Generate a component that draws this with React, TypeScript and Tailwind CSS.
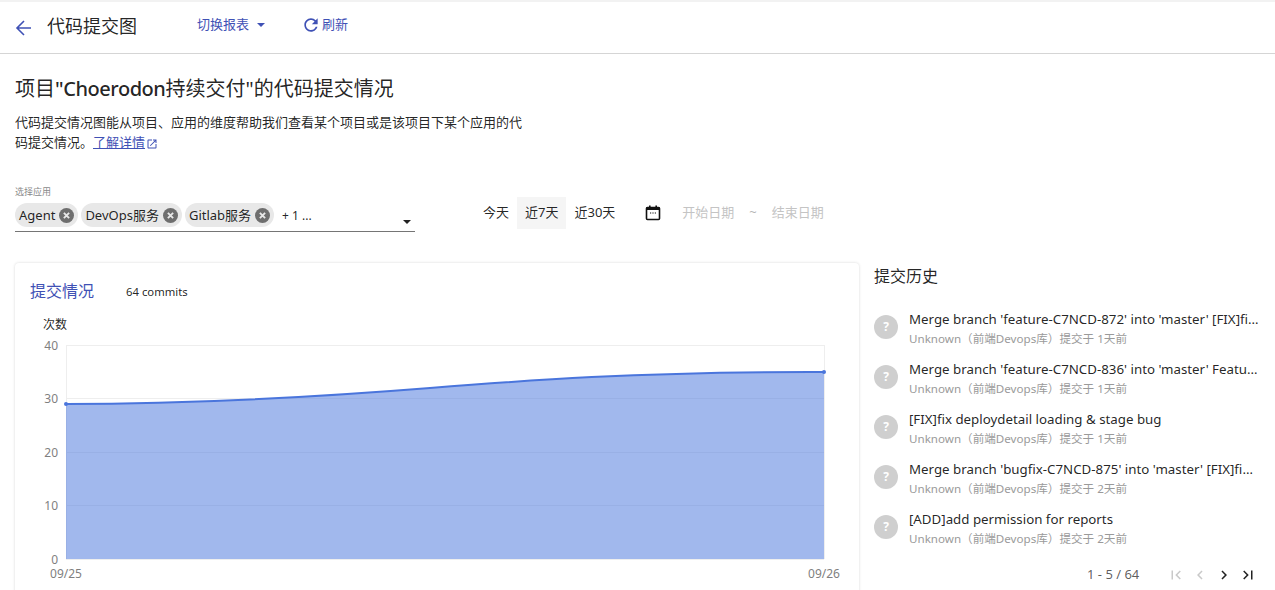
const commits = [
  ["Merge branch 'feature-C7NCD-872' into 'master' [FIX]fix deploydetail", "1天前"],
  ["Merge branch 'feature-C7NCD-836' into 'master' Feature C7NCD 836", "1天前"],
  ["[FIX]fix deploydetail loading & stage bug", "1天前"],
  ["Merge branch 'bugfix-C7NCD-875' into 'master' [FIX]fix deploydetail", "2天前"],
  ["[ADD]add permission for reports", "2天前"],
];

function Chip({ label }: { label: string }) {
  return (
    <span className="flex h-6 items-center rounded-xl bg-[#e8e8e8] pl-1 pr-1 pt-px text-[13px] text-[rgba(0,0,0,0.87)]">
      {label}
      <svg className="ml-1 h-[15px] w-[15px]" viewBox="0 0 16 16">
        <circle cx="8" cy="8" r="8" fill="#6e6e6e" />
        <path d="M5.2 5.2l5.6 5.6M10.8 5.2l-5.6 5.6" stroke="#e8e8e8" strokeWidth="2" />
      </svg>
    </span>
  );
}

function PageIcon({ d, off }: { d: string; off?: boolean }) {
  return (
    <span className="flex w-6 shrink-0 justify-center">
      <svg className="h-[18px] w-[18px]" viewBox="0 0 24 24">
        <path d={d} fill={off ? "#c9c9c9" : "#222222"} />
      </svg>
    </span>
  );
}

function Chart() {
  const ys = [
    [40, 345],
    [30, 398],
    [20, 452],
    [10, 505],
    [0, 559],
  ];
  const curve = "M66 404 C190 404 330 396 430 388 C520 380.8 640 371.5 824 372";
  return (
    <svg className="absolute left-0 top-0" width="844" height="327" viewBox="15 263 844 327">
      {ys.map(([v, y]) => (
        <g key={v}>
          <line x1="66" x2="824" y1={y + 0.5} y2={y + 0.5} stroke="#eeeeee" />
          <text x="58" y={y + 5} textAnchor="end" fontSize="12" fill="#7f7f7f" fontFamily="'Noto Sans', sans-serif">
            {v}
          </text>
        </g>
      ))}
      <line x1="66.5" x2="66.5" y1="345" y2="559" stroke="#eeeeee" />
      <line x1="824.5" x2="824.5" y1="345" y2="559" stroke="#eeeeee" />
      <path d={`${curve} L824 559 L66 559 Z`} fill="#4d78dd" fillOpacity="0.53" />
      <path d={curve} fill="none" stroke="#4a75dc" strokeWidth="2" />
      <circle cx="66" cy="404" r="2" fill="#4a75dc" />
      <circle cx="824" cy="372" r="2" fill="#4a75dc" />
      <text x="66" y="578" textAnchor="middle" fontSize="12" fill="#7f7f7f" fontFamily="'Noto Sans', sans-serif">09/25</text>
      <text x="824" y="578" textAnchor="middle" fontSize="12" fill="#7f7f7f" fontFamily="'Noto Sans', sans-serif">09/26</text>
    </svg>
  );
}

export default function App() {
  return (
    <div className="h-[590px] w-[1275px] overflow-hidden bg-white font-['Noto_Sans','Noto_Sans_CJK_SC',sans-serif] text-black">
      <header className="flex h-[54px] items-center border-b border-[#d5d5d5] border-t-2 border-t-[#f2f2f2] pl-3 pb-1">
        <svg className="mt-1 h-6 w-6 text-[#3f51b5]" viewBox="0 0 24 24" fill="none" stroke="currentColor" strokeWidth="1.6">
          <path d="M19 12H5M12 19l-7-7 7-7" />
        </svg>
        <h1 className="ml-[11px] w-[150px] text-lg font-normal text-[rgba(0,0,0,0.87)]">代码提交图</h1>
        <span className="mb-0.5 flex items-center text-[13px] text-[#3f51b5]">
          切换报表
          <svg className="ml-2 h-2 w-2" viewBox="0 0 8 8"><path d="M0 2h8L4 6z" fill="#3f51b5" /></svg>
        </span>
        <span className="mb-0.5 ml-9 flex items-center text-[13px] text-[#3f51b5]">
          <svg className="mr-px h-5 w-5" viewBox="0 0 24 24">
            <path fill="currentColor" d="M17.65 6.35C16.2 4.9 14.21 4 12 4c-4.42 0-7.99 3.58-7.99 8s3.57 8 7.99 8c3.73 0 6.84-2.55 7.73-6h-2.08c-.82 2.33-3.04 4-5.65 4-3.31 0-6-2.69-6-6s2.69-6 6-6c1.66 0 3.14.69 4.22 1.78L13 11h7V4l-2.35 2.35z" />
          </svg>
          刷新
        </span>
      </header>

      <main className="px-[15px]">
        <h2 className="mt-[21px] text-xl font-normal leading-7 text-[rgba(0,0,0,0.87)]">
          项目<span className="font-medium tracking-[-0.45px]">"Choerodon</span>持续交付"的代码提交情况
        </h2>
        <p className="mt-[9px] w-[512px] text-[13px] leading-5 text-[rgba(0,0,0,0.87)]">
          代码提交情况图能从项目、应用的维度帮助我们查看某个项目或是该项目下某个应用的代码提交情况。
          <span className="text-[#3f51b5] underline">了解详情</span>
          <svg className="ml-px inline h-3 w-3 text-[#3f51b5]" viewBox="0 0 24 24">
            <path fill="currentColor" d="M19 19H5V5h7V3H5c-1.11 0-2 .9-2 2v14c0 1.1.89 2 2 2h14c1.1 0 2-.9 2-2v-7h-2v7zM14 3v2h3.59l-9.83 9.83 1.41 1.41L19 6.41V10h2V3h-7z" />
          </svg>
        </p>

        <div className="mt-[34px] flex items-start">
          <div className="w-[400px]">
            <div className="text-[9px] leading-3 text-[#8a8a8a]">选择应用</div>
            <div className="relative mt-[5px] flex h-[29px] items-start gap-[3px] border-b border-[#757575]">
              <Chip label="Agent" />
              <Chip label="DevOps服务" />
              <Chip label="Gitlab服务" />
              <span className="ml-[5px] flex h-6 items-center pt-px text-xs text-[rgba(0,0,0,0.87)]">+ 1 ...</span>
              <svg className="absolute right-1 top-4 h-[6px] w-2" viewBox="0 0 8 6"><path d="M0 1h8L4 5z" fill="#222" /></svg>
            </div>
          </div>
          <div className="ml-[60px] mt-[11px] flex items-center text-[13px] text-[rgba(0,0,0,0.87)]">
            <span className="flex h-8 items-center px-2">今天</span>
            <span className="flex h-8 items-center bg-[#f5f5f5] px-2">近7天</span>
            <span className="flex h-8 items-center px-2">近30天</span>
            <svg className="ml-[22px] h-4 w-4" viewBox="0 0 16 16">
              <rect x="1.5" y="2.5" width="13" height="12" rx="1" fill="#fff" stroke="#111" strokeWidth="1.6" />
              <rect x="1.5" y="2" width="13" height="3" fill="#111" />
              <rect x="4" y="0.5" width="1.6" height="3" fill="#111" />
              <rect x="10.4" y="0.5" width="1.6" height="3" fill="#111" />
              <path d="M5 8h1.2M7.4 8h1.2M9.8 8H11" stroke="#111" strokeWidth="1.2" />
            </svg>
            <span className="ml-[21px] text-[#c4c4c4]">开始日期</span>
            <span className="ml-[15px] text-[#b5b5b5]">~</span>
            <span className="ml-[15px] text-[#c4c4c4]">结束日期</span>
          </div>
        </div>

        <div className="mt-[31px] flex">
          <section className="relative h-[340px] w-[844px] shrink-0 rounded-sm bg-white shadow-[0_0_3px_rgba(0,0,0,0.16)]">
            <Chart />
            <div className="relative flex items-center pl-[15px] pt-[18px]">
              <span className="text-base leading-5 text-[#3f51b5]">提交情况</span>
              <span className="ml-8 mt-0.5 text-[11.3px] text-[rgba(0,0,0,0.87)]">64 commits</span>
            </div>
            <div className="relative ml-7 mt-4 text-xs leading-4 text-[rgba(0,0,0,0.87)]">次数</div>
          </section>

          <aside className="ml-[15px] w-[386px] shrink-0 pt-px">
            <h3 className="text-base font-normal leading-6 text-[rgba(0,0,0,0.87)]">提交历史</h3>
            <ul className="mt-5 pr-px">
              {commits.map(([title, time]) => (
                <li key={title} className="flex h-[50px] items-start">
                  <span className="mt-[7px] flex h-6 w-6 shrink-0 items-center justify-center rounded-full bg-[#cfcfcf] text-xs font-bold text-white">?</span>
                  <div className="ml-[11px] min-w-0 flex-1 pt-px">
                    <div className="truncate text-[13.3px] leading-5 text-[rgba(0,0,0,0.87)]">{title}</div>
                    <div className="mt-px text-[11.6px] leading-[18px] text-[#9a9a9a]">Unknown（前端Devops库）提交于 {time}</div>
                  </div>
                </li>
              ))}
            </ul>
            <div className="mt-[7px] flex items-center text-[13px] text-[rgba(0,0,0,0.65)]">
              <span className="ml-[213px] w-[53px] shrink-0 whitespace-nowrap">1 - 5 / 64</span>
              <span className="ml-6 flex shrink-0">
                <PageIcon off d="M18.41 16.59L13.82 12l4.59-4.59L17 6l-6 6 6 6zM6 6h2v12H6z" />
                <PageIcon off d="M15.41 16.59L10.83 12l4.58-4.58L14 6l-6 6 6 6 1.41-1.41z" />
                <PageIcon d="M8.59 16.59L13.17 12 8.59 7.41 10 6l6 6-6 6-1.41-1.41z" />
                <PageIcon d="M5.59 7.41L10.18 12l-4.59 4.59L7 18l6-6-6-6zM16 6h2v12h-2z" />
              </span>
            </div>
          </aside>
        </div>
      </main>
    </div>
  );
}
